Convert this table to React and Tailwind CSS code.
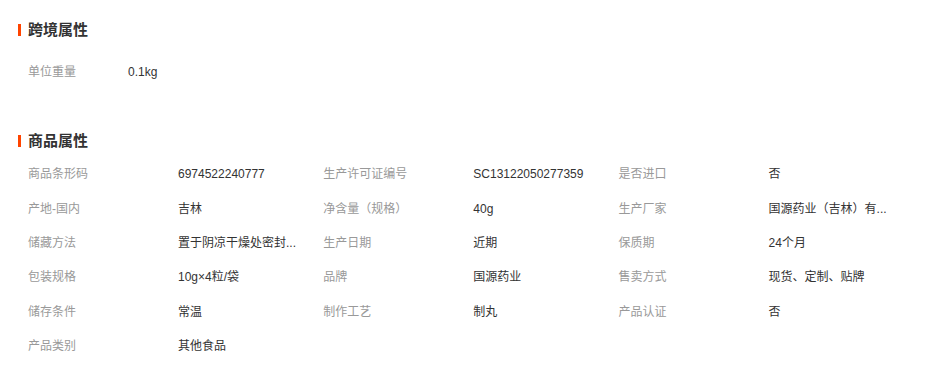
import React from 'react';

const crossBorder = [{ label: '单位重量', value: '0.1kg' }];

// values already shortened the way the page shows them
const productAttrs = [
  ['商品条形码', '6974522240777'],
  ['生产许可证编号', 'SC13122050277359'],
  ['是否进口', '否'],
  ['产地-国内', '吉林'],
  ['净含量（规格）', '40g'],
  ['生产厂家', '国源药业（吉林）有...'],
  ['储藏方法', '置于阴凉干燥处密封...'],
  ['生产日期', '近期'],
  ['保质期', '24个月'],
  ['包装规格', '10g×4粒/袋'],
  ['品牌', '国源药业'],
  ['售卖方式', '现货、定制、贴牌'],
  ['储存条件', '常温'],
  ['制作工艺', '制丸'],
  ['产品认证', '否'],
  ['产品类别', '其他食品'],
];

const SectionTitle = ({ children }) => (
  <div className="flex items-center h-[20px]">
    <span className="w-[3px] h-[12px] bg-[#ff4400]" />
    <h2 className="ml-[7px] text-[15px] font-bold text-[#333] leading-[20px]">{children}</h2>
  </div>
);

const App = () => {
  const rows = [];
  for (let i = 0; i < productAttrs.length; i += 3) {
    rows.push(productAttrs.slice(i, i + 3));
  }

  return (
    <div
      className="w-[926px] h-[375px] bg-white pl-[18px] overflow-hidden"
      style={{ fontFamily: '"Liberation Sans", "Noto Sans CJK SC", sans-serif' }}
    >
      {/* 跨境属性 */}
      <div className="pt-[20px]">
        <SectionTitle>跨境属性</SectionTitle>
        <div className="mt-[15px] pl-[10px]">
          {crossBorder.map((item) => (
            <div key={item.label} className="flex items-center h-[34px] text-[12px]">
              <span className="w-[100px] text-[#999]">{item.label}</span>
              <span className="text-[#333]">{item.value}</span>
            </div>
          ))}
        </div>
      </div>

      {/* 商品属性 */}
      <div className="mt-[42px]">
        <SectionTitle>商品属性</SectionTitle>
        <div className="mt-[6px] pl-[10px]">
          {rows.map((row, idx) => (
            <div key={idx} className="flex items-center h-[34.4px] text-[12px]">
              {row.map(([label, value]) => (
                <div key={label} className="flex items-center w-[295.3px]">
                  <span className="w-[150px] text-[#999] whitespace-nowrap">{label}</span>
                  <span className="whitespace-nowrap text-[#333]">{value}</span>
                </div>
              ))}
            </div>
          ))}
        </div>
      </div>
    </div>
  );
};

export default App;
